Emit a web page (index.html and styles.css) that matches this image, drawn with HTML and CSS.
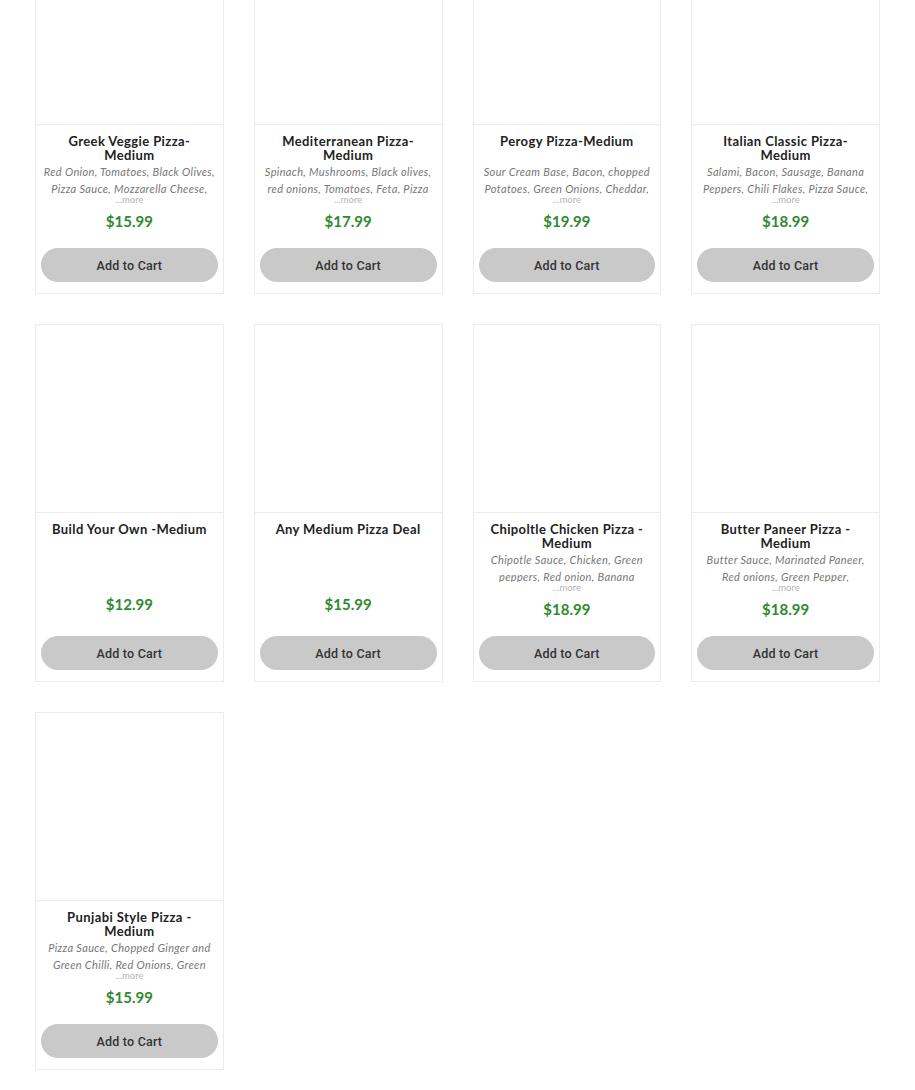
FILE: index.html
```html
<!DOCTYPE html>
<html lang="en">
<head>
  <meta charset="UTF-8">
  <meta name="viewport" content="width=device-width, initial-scale=1.0">
  <title>Medium Pizzas</title>
  <link rel="stylesheet" href="styles.css">
</head>
<body>

<div class="menu-grid">

  <div class="item-card">
    <div class="item-image"></div>
    <div class="item-body">
      <div class="item-info">
        <div class="item-title">Greek Veggie Pizza-Medium</div>
        <div class="item-desc">Red Onion, Tomatoes, Black Olives, Pizza Sauce, Mozzarella Cheese, Feta Cheese</div>
        <div class="item-more">...more</div>
      </div>
      <div class="item-price">$15.99</div>
      <button class="cart-btn">Add to Cart</button>
    </div>
  </div>

  <div class="item-card">
    <div class="item-image"></div>
    <div class="item-body">
      <div class="item-info">
        <div class="item-title">Mediterranean Pizza-Medium</div>
        <div class="item-desc">Spinach, Mushrooms, Black olives, red onions, Tomatoes, Feta, Pizza Sauce, Mozzarella Cheese</div>
        <div class="item-more">...more</div>
      </div>
      <div class="item-price">$17.99</div>
      <button class="cart-btn">Add to Cart</button>
    </div>
  </div>

  <div class="item-card">
    <div class="item-image"></div>
    <div class="item-body">
      <div class="item-info">
        <div class="item-title">Perogy Pizza-Medium</div>
        <div class="item-desc">Sour Cream Base, Bacon, chopped Potatoes, Green Onions, Cheddar, Mozzarella Cheese</div>
        <div class="item-more">...more</div>
      </div>
      <div class="item-price">$19.99</div>
      <button class="cart-btn">Add to Cart</button>
    </div>
  </div>

  <div class="item-card">
    <div class="item-image"></div>
    <div class="item-body">
      <div class="item-info">
        <div class="item-title">Italian Classic Pizza-Medium</div>
        <div class="item-desc">Salami, Bacon, Sausage, Banana Peppers, Chili Flakes, Pizza Sauce, Mozzarella Cheese</div>
        <div class="item-more">...more</div>
      </div>
      <div class="item-price">$18.99</div>
      <button class="cart-btn">Add to Cart</button>
    </div>
  </div>

  <div class="item-card">
    <div class="item-image"></div>
    <div class="item-body">
      <div class="item-info">
        <div class="item-title">Build Your Own -Medium</div>
      </div>
      <div class="item-price">$12.99</div>
      <button class="cart-btn">Add to Cart</button>
    </div>
  </div>

  <div class="item-card">
    <div class="item-image"></div>
    <div class="item-body">
      <div class="item-info">
        <div class="item-title">Any Medium Pizza Deal</div>
      </div>
      <div class="item-price">$15.99</div>
      <button class="cart-btn">Add to Cart</button>
    </div>
  </div>

  <div class="item-card">
    <div class="item-image"></div>
    <div class="item-body">
      <div class="item-info">
        <div class="item-title">Chipoltle Chicken Pizza - Medium</div>
        <div class="item-desc">Chipotle Sauce, Chicken, Green peppers, Red onion, Banana Peppers, Mozzarella Cheese</div>
        <div class="item-more">...more</div>
      </div>
      <div class="item-price">$18.99</div>
      <button class="cart-btn">Add to Cart</button>
    </div>
  </div>

  <div class="item-card">
    <div class="item-image"></div>
    <div class="item-body">
      <div class="item-info">
        <div class="item-title">Butter Paneer Pizza - Medium</div>
        <div class="item-desc">Butter Sauce, Marinated Paneer, Red onions, Green Pepper, Mozzarella Cheese</div>
        <div class="item-more">...more</div>
      </div>
      <div class="item-price">$18.99</div>
      <button class="cart-btn">Add to Cart</button>
    </div>
  </div>

  <div class="item-card">
    <div class="item-image"></div>
    <div class="item-body">
      <div class="item-info">
        <div class="item-title">Punjabi Style Pizza - Medium</div>
        <div class="item-desc">Pizza Sauce, Chopped Ginger and Green Chilli, Red Onions, Green Peppers, Mozzarella Cheese</div>
        <div class="item-more">...more</div>
      </div>
      <div class="item-price">$15.99</div>
      <button class="cart-btn">Add to Cart</button>
    </div>
  </div>

</div>

</body>
</html>
```

FILE: styles.css
```css
body {
  margin: 0;
  background-color: #fff;
  font-family: Lato, 'Open Sans', sans-serif;
  color: #222;
}
.menu-grid {
  display: grid;
  grid-template-columns: repeat(4, 1fr);
  column-gap: 30px;
  row-gap: 30px;
  margin: -64px 35px 0 35px;
}
.item-card {
  box-sizing: border-box;
  height: 358px;
  border: 1px solid #ececec;
  display: flex;
  flex-direction: column;
  background-color: #fff;
}
.item-image {
  height: 188px;
  flex-shrink: 0;
  border-bottom: 1px solid #ececec;
  box-sizing: border-box;
}
.item-body {
  flex: 1;
  display: flex;
  flex-direction: column;
  padding: 9px 5px 11px 5px;
  text-align: center;
}
.item-info {
  min-height: 73px;
}
.item-title {
  min-height: 28px;
  font-size: 13px;
  line-height: 14px;
  font-weight: 700;
  letter-spacing: 0.4px;
  color: #222;
  padding: 0 6px;
}
.item-desc {
  margin-top: 1px;
  height: 31px;
  overflow: hidden;
  font-size: 11px;
  line-height: 17px;
  font-style: italic;
  letter-spacing: 0.35px;
  color: #777;
}
.item-more {
  height: 12px;
  font-size: 9.5px;
  line-height: 12px;
  color: #b5b5b5;
  margin-bottom: 6px;
}
.item-price {
  font-size: 15px;
  line-height: 18px;
  font-weight: 700;
  color: #2f8a2f;
}
.cart-btn {
  margin-top: auto;
  height: 34px;
  width: 100%;
  border: none;
  border-radius: 17px;
  background-color: #c9c9c9;
  font-family: Roboto, sans-serif;
  font-size: 12.5px;
  font-weight: 500;
  letter-spacing: 0.2px;
  color: #333;
  cursor: pointer;
}
```
